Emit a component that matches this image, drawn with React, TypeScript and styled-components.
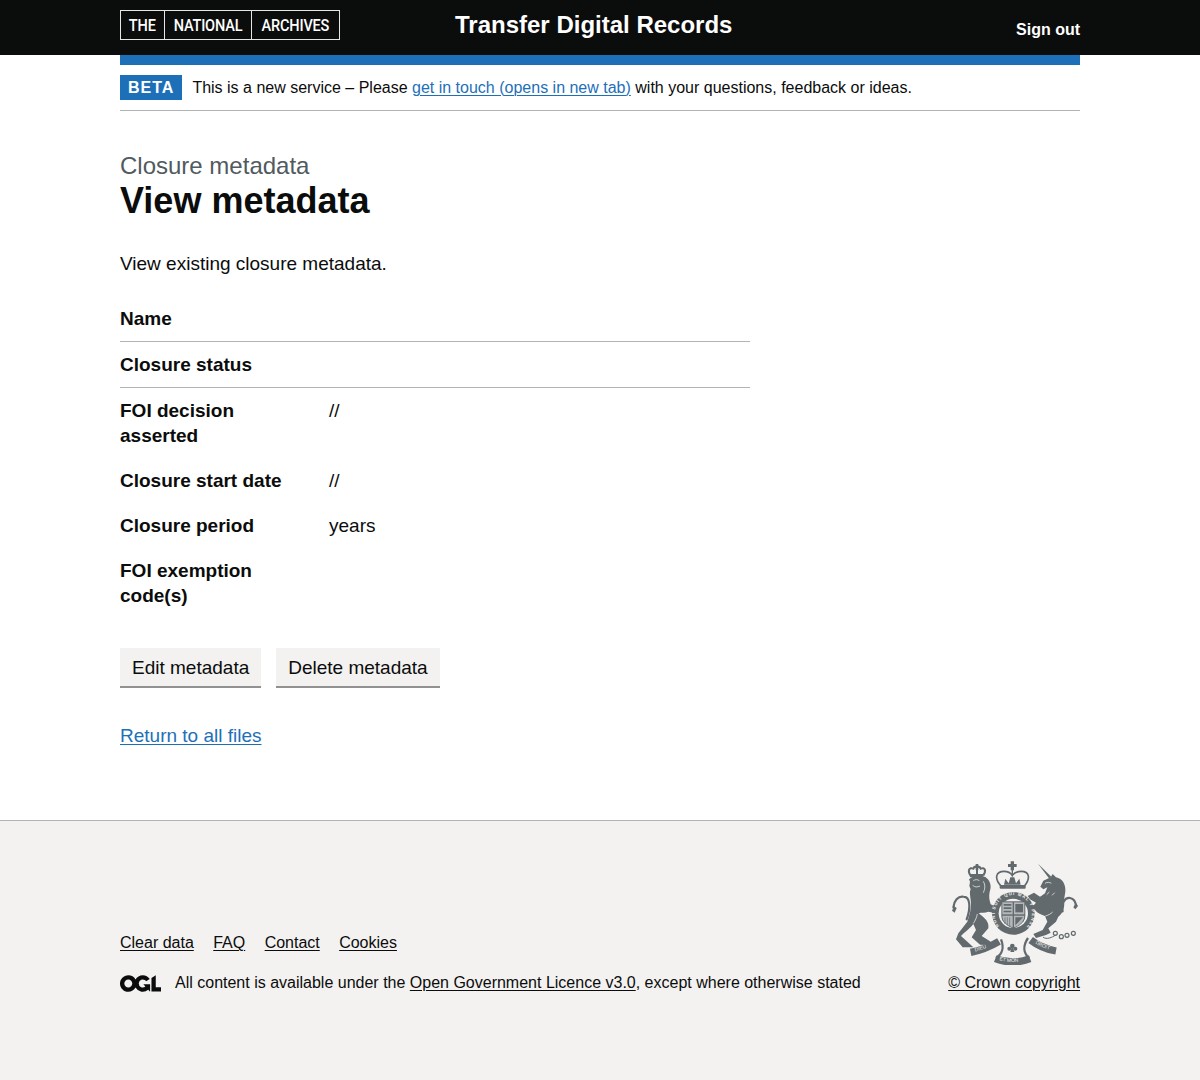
import React from "react";
import styled, { createGlobalStyle } from "styled-components";

const Global = createGlobalStyle`
  html, body { margin: 0; padding: 0; background: #fff; }
  body { font-family: "Liberation Sans", Arial, sans-serif; color: #0b0c0c; }
`;
const Page = styled.div`
  min-height: 1080px;
  display: flex;
  flex-direction: column;
`;
const Header = styled.header`
  height: 55px;
  background: #0b0c0c;
  color: #fff;
`;
const HeaderInner = styled.div`
  width: 960px;
  height: 55px;
  margin: 0 auto;
  display: flex;
  align-items: flex-start;
`;
const Logo = styled.a`
  display: flex;
  margin-top: 10px;
  height: 30px;
  width: 220px;
  box-sizing: border-box;
  border: 1px solid #e6e6e6;
`;
const LogoCell = styled.span<{ $w: number }>`
  width: ${(p) => p.$w}px;
  box-sizing: border-box;
  display: flex;
  align-items: center;
  justify-content: center;
  & + & { border-left: 1px solid #e6e6e6; }
`;
const LogoWord = styled.span`
  display: block;
  flex: none;
  font-family: Roboto, sans-serif;
  font-weight: 500;
  font-size: 16.5px;
  letter-spacing: -0.2px;
  color: #fff;
  transform: scaleX(0.88);
`;
const ServiceTitle = styled.a`
  margin-left: 115px;
  margin-top: 10px;
  font-weight: 700;
  font-size: 24px;
  line-height: 30px;
  color: #fff;
`;
const SignOut = styled.a`
  margin-left: auto;
  margin-top: 20px;
  font-weight: 700;
  font-size: 16px;
  line-height: 20px;
  color: #fff;
`;
const Width = styled.div`
  width: 960px;
  margin: 0 auto;
`;
const Banner = styled.div`
  border-top: 10px solid #1d70b8;
  border-bottom: 1px solid #b1b4b6;
  height: 45px;
  display: flex;
  align-items: center;
`;
const Tag = styled.strong`
  background: #1d70b8;
  color: #fff;
  font-size: 16px;
  line-height: 25px;
  height: 25px;
  padding: 0 8px;
  letter-spacing: 1px;
  margin-right: 10px;
`;
const BannerText = styled.span`
  font-size: 16px;
  line-height: 20px;
`;
const Link = styled.a`
  color: #1d70b8;
  text-decoration: underline;
  text-underline-offset: 0.1em;
  text-decoration-thickness: 1px;
`;
const Main = styled.main`
  padding-top: 40px;
  flex: 1;
  box-sizing: border-box;
`;
const Caption = styled.span`
  display: block;
  font-size: 24px;
  line-height: 30px;
  color: #505a5f;
`;
const H1 = styled.h1`
  margin: 0 0 30px;
  font-size: 36px;
  line-height: 40px;
  font-weight: 700;
`;
const Lead = styled.p`
  margin: 0 0 20px;
  font-size: 19px;
  line-height: 25px;
`;
const Summary = styled.dl`
  width: 630px;
  margin: 0 0 30px;
  font-size: 19px;
  line-height: 25px;
`;
const Row = styled.div<{ $border?: boolean }>`
  display: flex;
  border-bottom: ${(p) => (p.$border ? "1px solid #b1b4b6" : "none")};
`;
const Key = styled.dt`
  width: 189px;
  margin-right: 20px;
  padding: 10px 0;
  font-weight: 700;
`;
const Value = styled.dd`
  margin: 0;
  padding: 10px 0;
`;
const Buttons = styled.div`
  display: flex;
  gap: 15px;
  margin-bottom: 35px;
`;
const Button = styled.button`
  height: 38px;
  padding: 0 12px;
  border: 0;
  margin-bottom: 2px;
  background: #f3f2f1;
  box-shadow: 0 2px 0 #929191;
  color: #0b0c0c;
  font-family: inherit;
  font-size: 19px;
  line-height: 25px;
`;
const Return = styled(Link)`
  display: block;
  font-size: 19px;
  line-height: 25px;
  width: max-content;
`;
const Footer = styled.footer`
  height: 260px;
  box-sizing: border-box;
  margin-top: 72px;
  border-top: 1px solid #b1b4b6;
  background: #f3f2f1;
  padding-top: 39px;
`;
const FooterInner = styled.div`
  width: 960px;
  margin: 0 auto;
  display: flex;
  justify-content: space-between;
  align-items: flex-end;
`;
const Meta = styled.div`
  font-size: 16px;
  line-height: 20px;
`;
const FootLinks = styled.div`
  display: flex;
  gap: 19.4px;
  margin-bottom: 20px;
`;
const FootLink = styled.a`
  color: #0b0c0c;
  text-decoration: underline;
  text-decoration-thickness: 1px;
  text-underline-offset: 0.1em;
`;
const Licence = styled.div`
  display: flex;
  align-items: center;
  gap: 14px;
`;
const CrestCol = styled.div`
  display: flex;
  flex-direction: column;
  align-items: flex-end;
  font-size: 16px;
  line-height: 20px;
`;
const CrestSvg = styled.svg`
  display: block;
  margin-bottom: 8px;
`;

const Ogl = () => (
  <svg viewBox="0 0 483.2 195.7" width="41" height="17" aria-hidden="true">
    <path
      fill="#0b0c0c"
      d="M421.5 142.8V.1l-50.7 32.3v161.1h112.4v-50.7zm-122.3-9.6A47.12 47.12 0 0 1 221 97.8c0-26 21.1-47.1 47.1-47.1 16.7 0 31.4 8.7 39.7 21.8l42.7-27.2A97.63 97.63 0 0 0 268.1 0c-36.5 0-68.3 20.1-85.1 49.7A98 98 0 0 0 97.8 0C43.9 0 0 43.9 0 97.8s43.9 97.8 97.8 97.8c36.5 0 68.3-20.1 85.1-49.7a97.76 97.76 0 0 0 149.6 25.4l19.4 22.2h3v-87.8h-80l24.3 27.5zM97.8 145c-26 0-47.1-21.1-47.1-47.1s21.1-47.1 47.1-47.1 47.2 21 47.2 47S123.8 145 97.8 145"
    />
  </svg>
);

const C = "#626a6e";
const BG = "#f3f2f1";

const Crest = () => (
  <CrestSvg viewBox="60 30 390 315" width="130" height="105" aria-hidden="true">
    <defs>
      <path id="garterRing" d="M208 228A56 56 0 1 1 292 228" />
      <path id="ribL" d="M128 306C155 300 180 290 205 276" />
      <path id="ribC" d="M198 328C228 339 268 339 298 328" />
      <path id="ribR" d="M304 272C325 288 348 298 372 302" />
    </defs>

    {/* lion crown */}
    <g fill="none" stroke={C} strokeWidth="6">
      <path d="M121 76C112 62 118 50 130 56C134 46 148 46 152 56C164 50 170 62 160 76" />
      <path d="M141 56V72" />
    </g>
    <g fill={C}>
      <path d="M137 42h8v6h6v6h-6v6h-8v-6h-6v-6h6z" />
      <path d="M118 72h44l-2 10h-40z" />
      {/* lion */}
      <path d="M120 95L117 88L128 80L165 80C178 88 187 105 179 125C176 140 178 150 182 163L212 178L224 190L205 191L175 185C165 190 154 186 146 190C165 205 178 215 175 235L155 258L180 274L190 286L150 284L125 262L138 240L130 222C115 240 100 250 93 258L122 284L130 292L98 292L78 268L85 250L112 215C120 190 125 175 122 150C120 135 118 125 122 118L118 108Z" />
      <path d="M66 182L72 168L80 174L74 188Z" />
      {/* unicorn */}
      <path d="M324 41L364 80L358 86Z" />
      <path d="M331 110L340 92L362 82L368 72L378 82C398 85 408 105 406 125L402 150C405 170 400 190 385 200L378 215L355 235L362 248L348 255L318 264L310 252L338 240L352 215L345 198C335 195 322 190 315 180L300 179L294 170L312 165L318 158L300 148L293 138L312 128L330 140L345 130L352 112L340 118Z" />
      <path d="M436 178L444 168L438 158L430 172Z" />
      {/* royal crown */}
      <path d="M242 34h10v8h8v9h-8v10h-10v-10h-8v-9h8z" />
      <path d="M222 104L226 86L236 100L241 82H253L258 100L268 86L272 104Z" />
      <rect x="209" y="105" width="78" height="11" rx="3" />
    </g>
    <g fill="none" stroke={C} strokeLinecap="round">
      <path d="M110 208C122 176 122 140 100 140C84 138 72 152 70 172" strokeWidth="6.5" />
      <path d="M398 184C392 162 404 142 420 144C432 146 437 156 438 168" strokeWidth="6.5" />
      <path d="M212 107C192 84 198 64 222 64C234 64 243 70 247 76C252 70 262 64 274 64C298 64 302 84 284 107" strokeWidth="5" />
      <path d="M247 60V78" strokeWidth="4" />
      <circle cx="376" cy="250" r="6" strokeWidth="3.5" />
      <circle cx="394" cy="260" r="6" strokeWidth="3.5" />
      <circle cx="411" cy="256" r="6" strokeWidth="3.5" />
      <circle cx="430" cy="250" r="6" strokeWidth="3.5" />
      <path d="M340 262C350 270 366 262 376 256" strokeWidth="3" />
    </g>
    {/* highlights in the animals */}
    <g fill="none" stroke={BG} strokeWidth="2.2">
      <path d="M130 92C136 88 142 88 148 92M128 106C134 112 142 112 150 108M160 94C166 104 166 116 160 128" />
      <path d="M345 100C352 96 358 96 364 100M334 136L344 128M350 134L358 126M366 136L374 128" />
      <path d="M130 220C136 212 140 202 142 192M346 198C354 196 362 192 368 186" />
    </g>

    {/* garter and shield */}
    <circle cx="250" cy="190" r="64" fill={C} />
    <circle cx="250" cy="190" r="44" fill={BG} />
    <path d="M214 154H286V198C286 216 268 228 250 236C232 228 214 216 214 198Z" fill={C} />
    <g fill="#b4b8ba">
      <path d="M217 157H248V193H217Z" />
      <path d="M252 157H283V193H252Z" />
      <path d="M217 197H248V232C232 226 217 214 217 197Z" />
      <path d="M252 197H283C283 214 268 226 252 232Z" />
    </g>
    <g fill={C}>
      <path d="M221 162h23v5h-23zM221 172h23v5h-23zM221 182h23v5h-23z" />
      <path d="M256 162h23v25h-23z" />
      <path d="M256 202h23l-23 24z" />
    </g>
    <g fill="none" stroke={C} strokeWidth="2">
      <path d="M225 202V222M232 202V226M239 202V228" />
    </g>
    <text fontFamily="'Liberation Sans', sans-serif" fontSize="13" fill={BG} fontWeight="700">
      <textPath href="#garterRing" textLength="260">HONI SOIT QUI MAL Y PENSE</textPath>
    </text>

    {/* motto ribbon */}
    <g fill="none" stroke={C} strokeLinecap="butt">
      <path d="M122 307C153 301 180 290 207 274" strokeWidth="22" />
      <path d="M196 326C228 339 268 339 300 326" strokeWidth="22" />
      <path d="M302 270C325 288 350 298 378 303" strokeWidth="22" />
      <path d="M213 268C222 290 218 312 198 324" strokeWidth="7" />
      <path d="M294 264C278 288 280 310 298 324" strokeWidth="7" />
    </g>
    <g fill={C}>
      <circle cx="247" cy="288" r="7" />
      <circle cx="238" cy="296" r="6" />
      <circle cx="256" cy="296" r="6" />
      <path d="M247 284L253 306H241Z" />
    </g>
    <g fontFamily="'Liberation Sans', sans-serif" fontSize="15" fill={BG}>
      <text><textPath href="#ribL" startOffset="8">DIEU</textPath></text>
      <text><textPath href="#ribC" startOffset="10">ET MON</textPath></text>
      <text><textPath href="#ribR" startOffset="14">DROIT</textPath></text>
    </g>
  </CrestSvg>
);

export default function App() {
  return (
    <Page>
      <Global />
      <Header>
        <HeaderInner>
          <Logo>
            <LogoCell $w={43}><LogoWord>THE</LogoWord></LogoCell>
            <LogoCell $w={87}><LogoWord>NATIONAL</LogoWord></LogoCell>
            <LogoCell $w={88}><LogoWord>ARCHIVES</LogoWord></LogoCell>
          </Logo>
          <ServiceTitle>Transfer Digital Records</ServiceTitle>
          <SignOut>Sign out</SignOut>
        </HeaderInner>
      </Header>
      <Width>
        <Banner>
          <Tag>BETA</Tag>
          <BannerText>
            This is a new service – Please <Link>get in touch (opens in new tab)</Link> with your questions, feedback or ideas.
          </BannerText>
        </Banner>
      </Width>
      <Main>
        <Width>
          <Caption>Closure metadata</Caption>
          <H1>View metadata</H1>
          <Lead>View existing closure metadata.</Lead>
          <Summary>
            <Row $border><Key>Name</Key><Value /></Row>
            <Row $border><Key>Closure status</Key><Value /></Row>
            <Row><Key>FOI decision asserted</Key><Value>//</Value></Row>
            <Row><Key>Closure start date</Key><Value>//</Value></Row>
            <Row><Key>Closure period</Key><Value>years</Value></Row>
            <Row><Key>FOI exemption code(s)</Key><Value /></Row>
          </Summary>
          <Buttons>
            <Button>Edit metadata</Button>
            <Button>Delete metadata</Button>
          </Buttons>
          <Return>Return to all files</Return>
        </Width>
      </Main>
      <Footer>
        <FooterInner>
          <Meta>
            <FootLinks>
              <FootLink>Clear data</FootLink>
              <FootLink>FAQ</FootLink>
              <FootLink>Contact</FootLink>
              <FootLink>Cookies</FootLink>
            </FootLinks>
            <Licence>
              <Ogl />
              <span>
                All content is available under the <FootLink>Open Government Licence v3.0</FootLink>, except where otherwise stated
              </span>
            </Licence>
          </Meta>
          <CrestCol>
            <Crest />
            <FootLink>© Crown copyright</FootLink>
          </CrestCol>
        </FooterInner>
      </Footer>
    </Page>
  );
}
